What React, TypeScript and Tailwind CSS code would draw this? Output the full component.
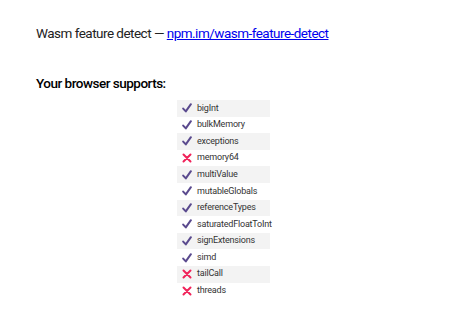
import React from "react";

const features: [string, boolean][] = [
  ["bigInt", true],
  ["bulkMemory", true],
  ["exceptions", true],
  ["memory64", false],
  ["multiValue", true],
  ["mutableGlobals", true],
  ["referenceTypes", true],
  ["saturatedFloatToInt", true],
  ["signExtensions", true],
  ["simd", true],
  ["tailCall", false],
  ["threads", false],
];

const Check = () => (
  <svg width="10" height="10" viewBox="0 0 10 10" className="shrink-0">
    <path d="M1.2 5.6 L3.8 8.4 L8.9 1.2" fill="none" stroke="#5a4a8e" strokeWidth="2" strokeLinecap="round" strokeLinejoin="round" />
  </svg>
);

const Cross = () => (
  <svg width="10" height="10" viewBox="0 0 10 10" className="shrink-0">
    <path d="M1.5 1.5 L8.5 8.5 M8.5 1.5 L1.5 8.5" fill="none" stroke="#f0235a" strokeWidth="2" strokeLinecap="round" />
  </svg>
);

export default function App() {
  return (
    <div className="w-[449px] h-[319px] bg-white font-['Roboto',sans-serif] text-[#222]">
      <div className="pl-[36px] pt-[24px]">
        <p className="text-[13.5px] leading-[18px] tracking-[-0.52px]">
          Wasm feature detect —{" "}
          <a href="#" className="text-[#0000ee] underline">npm.im/wasm-feature-detect</a>
        </p>
        <h2 className="mt-[32px] text-[13.5px] leading-[18px] font-medium tracking-[-0.5px] text-black">Your browser supports:</h2>
      </div>
      <div className="mt-[8px] flex justify-center">
        <div className="w-[93px] ml-[-2px]">
          {features.map(([name, ok], i) => (
            <div
              key={name}
              className={`flex items-center h-[16.6px] pl-[5px] gap-[5px] text-[9px] tracking-[-0.2px] text-[#333] ${i % 2 === 0 ? "bg-[#f3f3f3]" : ""}`}
            >
              {ok ? <Check /> : <Cross />}
              <span>{name}</span>
            </div>
          ))}
        </div>
      </div>
    </div>
  );
}
